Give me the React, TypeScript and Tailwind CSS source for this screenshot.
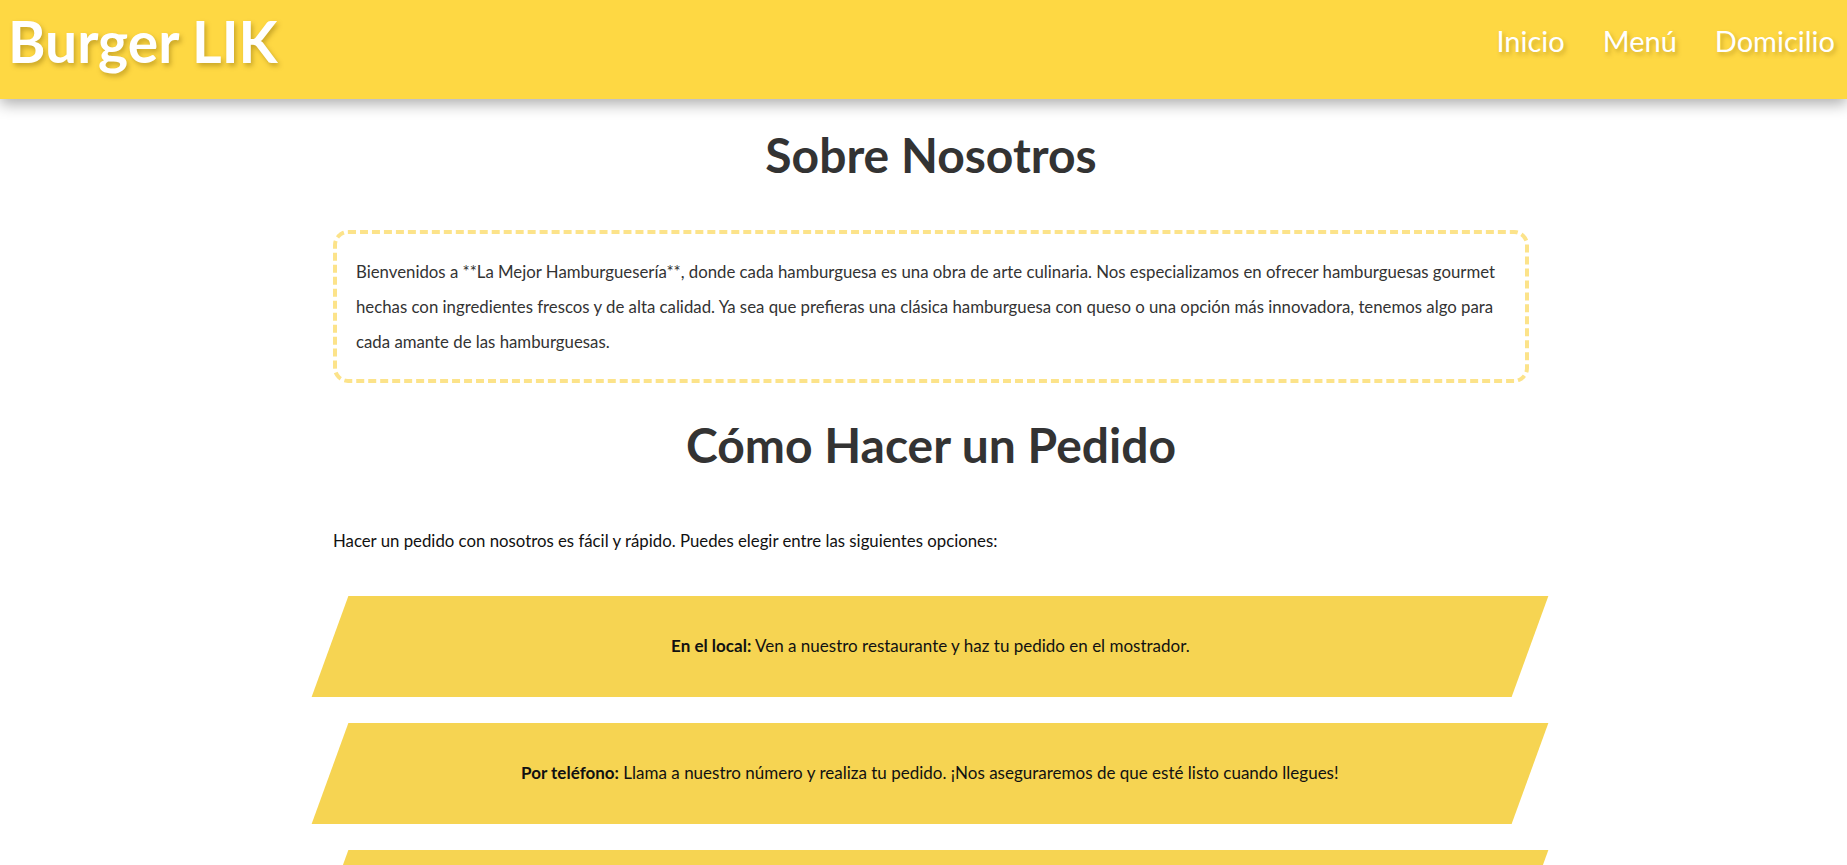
import React from 'react';

const opciones = [
  {
    titulo: 'En el local:',
    texto: 'Ven a nuestro restaurante y haz tu pedido en el mostrador.',
  },
  {
    titulo: 'Por teléfono:',
    texto: 'Llama a nuestro número y realiza tu pedido. ¡Nos aseguraremos de que esté listo cuando llegues!',
  },
  {
    titulo: 'A domicilio:',
    texto: 'Haz tu pedido en línea y te lo llevamos hasta la puerta de tu casa.',
  },
];

const Header: React.FC = () => {
  return (
    <header className="relative z-10 flex h-[99px] items-center justify-between bg-[#fed843] pb-4 pl-[8px] pr-[12px] shadow-[0_5px_14px_rgba(0,0,0,0.32)]">
      <h1 className="text-[57px] font-bold leading-[1.2] text-white [text-shadow:2px_3px_5px_rgba(120,90,0,0.4)]">
        Burger LIK
      </h1>
      <nav className="flex gap-[38px] text-[29px] leading-[1.2] text-white [text-shadow:2px_3px_4px_rgba(120,90,0,0.35)]">
        <a href="#">Inicio</a>
        <a href="#">Menú</a>
        <a href="#">Domicilio</a>
      </nav>
    </header>
  );
};

const Opcion: React.FC<{ titulo: string; texto: string }> = (props) => {
  return (
    <div className="flex h-[101px] w-[1200px] -ml-[3px] items-center justify-center bg-[#f6d452] skew-x-[-20deg]">
      <p className="text-[17px] leading-[1.2] text-[#111] skew-x-[20deg]">
        <strong className="font-bold">{props.titulo}</strong> {props.texto}
      </p>
    </div>
  );
};

export default function App() {
  return (
    <div className="min-h-screen bg-white font-['Lato','Noto_Sans',sans-serif] text-[#333]">
      <Header />
      <main className="mx-auto w-[1211px] pl-[15px]">
        <h2 className="mt-[27px] text-center text-[48px] font-bold leading-[1.2] text-[#333]">
          Sobre Nosotros
        </h2>
        <div className="mt-[46px] rounded-[15px] border-4 border-dashed border-[#fce38a] px-[19px] py-5">
          <p className="text-[16.8px] leading-[35px] text-[#333]">
            Bienvenidos a **La Mejor Hamburguesería**, donde cada hamburguesa es una obra de arte culinaria. Nos
            especializamos en ofrecer hamburguesas gourmet hechas con ingredientes frescos y de alta calidad. Ya sea
            que prefieras una clásica hamburguesa con queso o una opción más innovadora, tenemos algo para cada amante
            de las hamburguesas.
          </p>
        </div>
        <h2 className="mt-[33px] text-center text-[48px] font-bold leading-[1.2] text-[#333]">
          Cómo Hacer un Pedido
        </h2>
        <p className="mt-[58px] text-[16.8px] leading-[1.2] text-[#111]">
          Hacer un pedido con nosotros es fácil y rápido. Puedes elegir entre las siguientes opciones:
        </p>
        <div className="mt-[45px] flex flex-col gap-[26px] pb-10">
          {opciones.map((o) => (
            <Opcion key={o.titulo} titulo={o.titulo} texto={o.texto} />
          ))}
        </div>
      </main>
    </div>
  );
}
